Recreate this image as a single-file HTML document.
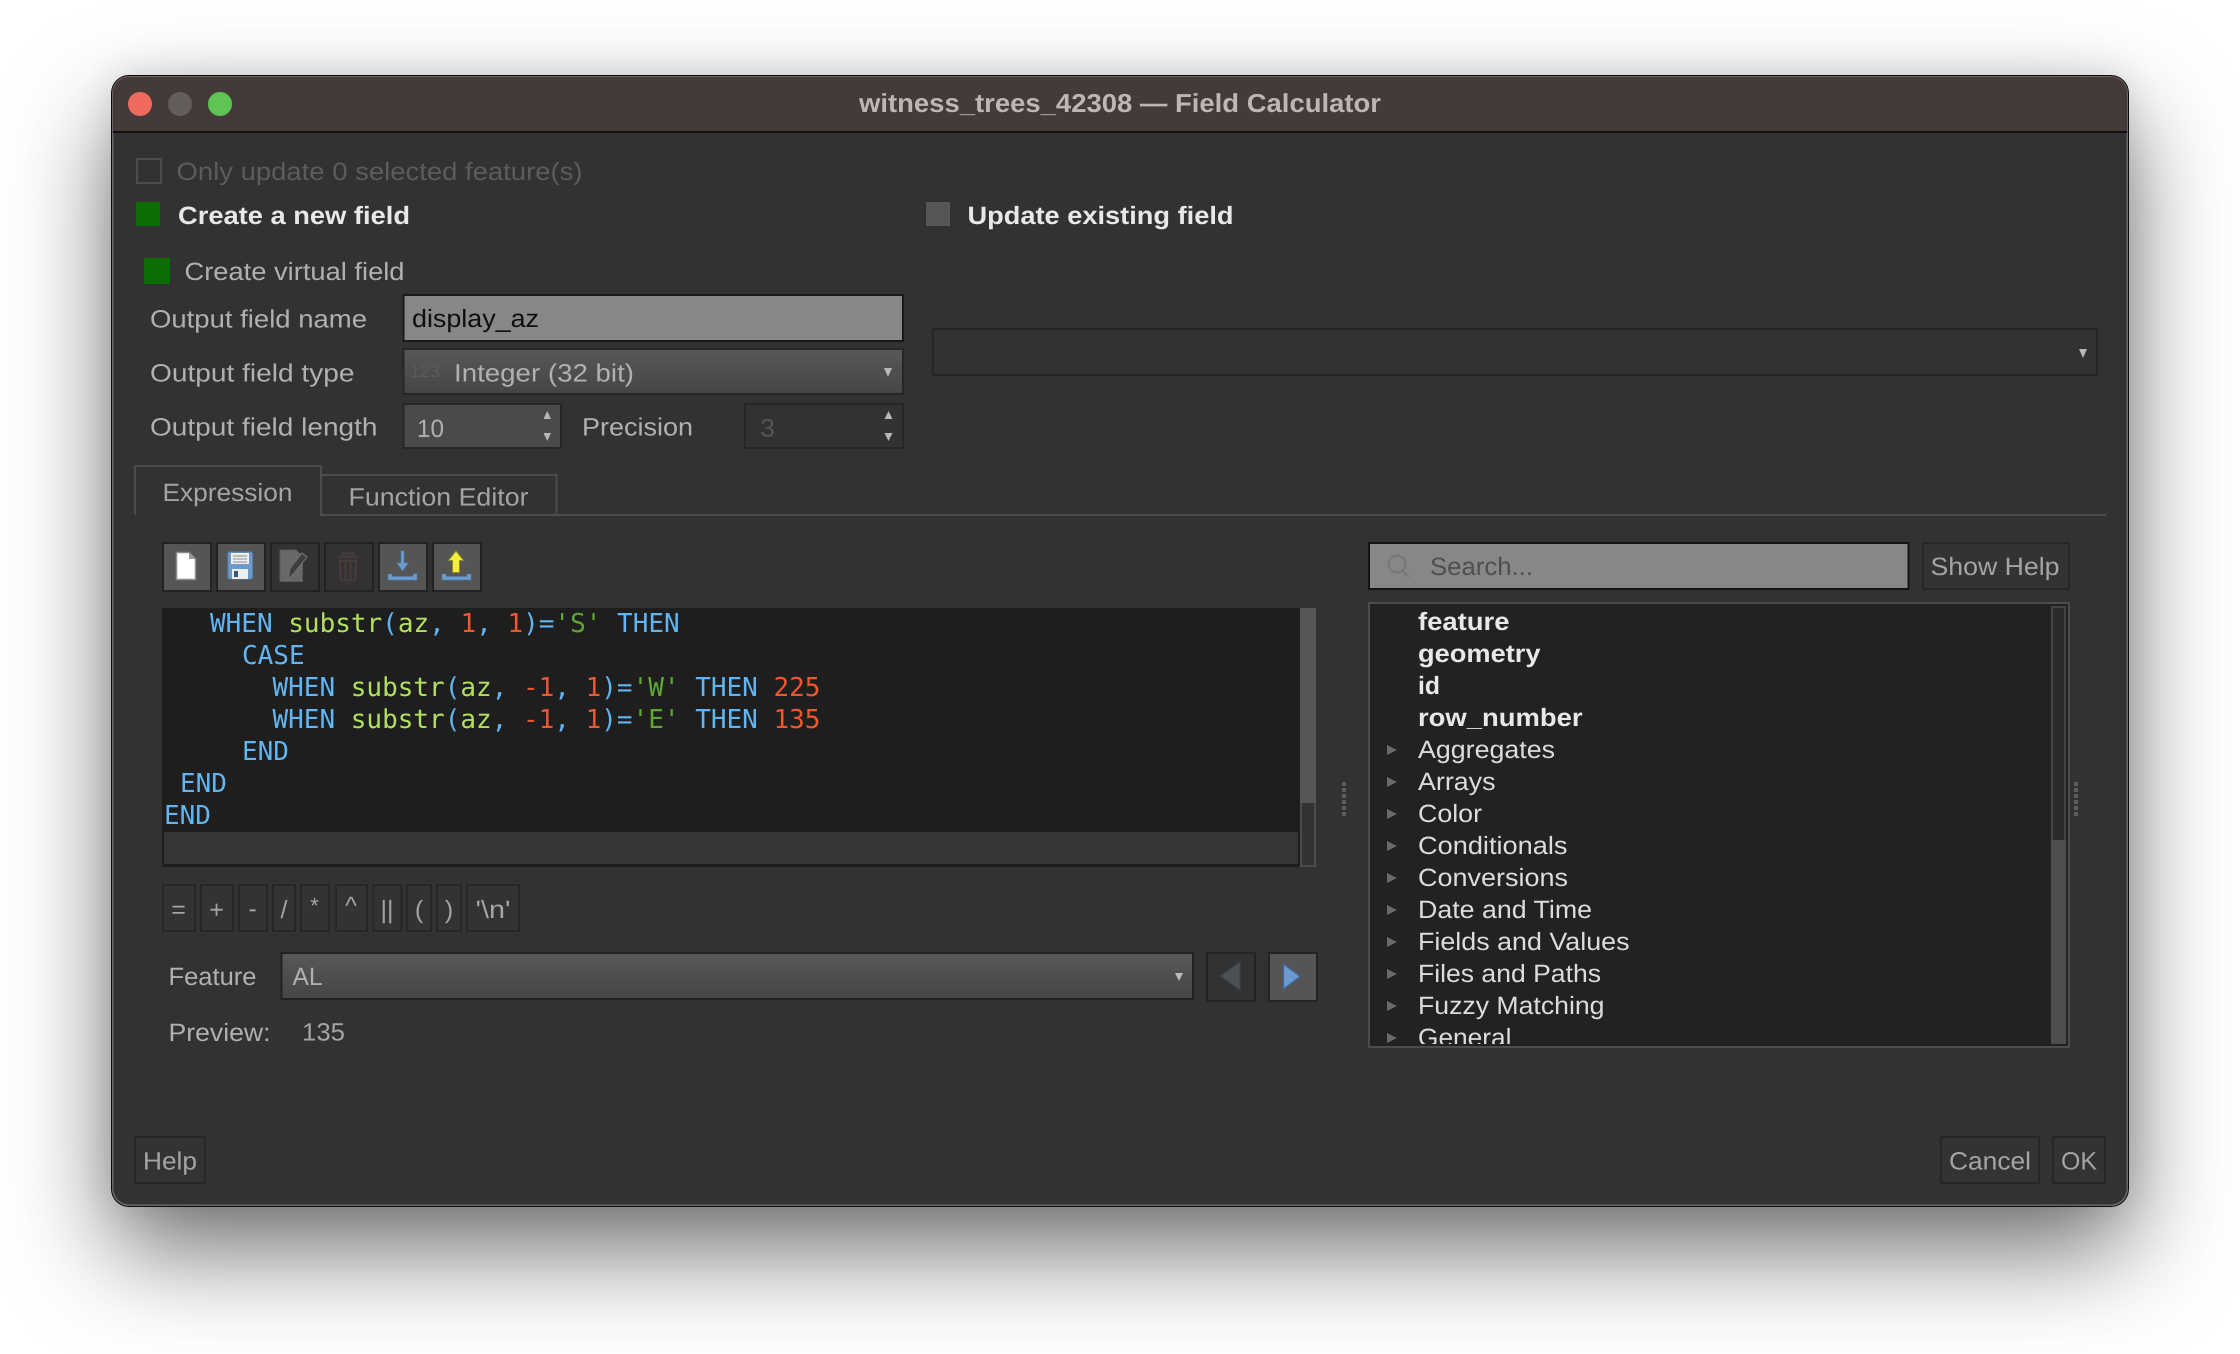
<!DOCTYPE html>
<html><head><meta charset="utf-8"><title>Field Calculator</title>
<style>
html,body{margin:0;padding:0;width:2240px;height:1354px;overflow:hidden;background:#fff}
#sh{position:absolute;left:112px;top:75px;width:2017px;height:1132px;border-radius:18px;box-shadow:0 44px 100px 0 rgba(0,0,0,.56),0 0 36px rgba(0,0,0,.1)}
svg{position:absolute;left:0;top:0}
text{font-family:"Liberation Sans",sans-serif;font-size:25px;fill:#b0b0b0;text-rendering:geometricPrecision}
.b{font-weight:700;fill:#e8e8e8}
.t{fill:#dcdcdc}
.g{fill:#a4a4a4}
.c{font-family:"DejaVu Sans Mono","Liberation Mono",monospace;font-size:26px;fill:#61b5f2;white-space:pre}
.f{fill:#b2e05e}.n{fill:#f0562f}.s{fill:#5ea832}
</style></head><body>
<div id="sh"></div>
<svg width="2240" height="1354" viewBox="0 0 2240 1354" xmlns="http://www.w3.org/2000/svg">
<defs>
<clipPath id="tc"><rect x="113" y="77" width="2014" height="100" rx="16"/></clipPath>
<clipPath id="treeclip"><rect x="1370" y="604" width="680" height="440"/></clipPath>
<linearGradient id="cg" x1="0" y1="0" x2="0" y2="1"><stop offset="0" stop-color="#585858"/><stop offset="1" stop-color="#454545"/></linearGradient>
</defs>
<!-- window -->
<rect x="111" y="75" width="2018" height="1132" rx="18" fill="#0a0a0a"/>
<rect x="112" y="76" width="2016" height="1130" rx="17" fill="#686868"/>
<rect x="113.500" y="77" width="2013" height="1127.500" rx="16" fill="#323232"/>
<rect x="113" y="77" width="2014" height="54" fill="#443a38" clip-path="url(#tc)"/>
<rect x="113" y="131" width="2014" height="2" fill="#111"/>
<circle cx="140" cy="104" r="12" fill="#ee6a5f"/><circle cx="180" cy="104" r="12" fill="#645e5b"/><circle cx="220" cy="104" r="12" fill="#5fc454"/>
<text x="859" y="112" class="b" style="font-size:26px;fill:#bdb6b3" textLength="522" lengthAdjust="spacingAndGlyphs">witness_trees_42308 — Field Calculator</text>

<!-- top options -->
<rect x="137" y="159" width="24" height="24" fill="none" stroke="#4c4c4c" stroke-width="2"/>
<text x="176.500" y="180" style="fill:#5c5c5c" textLength="406" lengthAdjust="spacingAndGlyphs">Only update 0 selected feature(s)</text>
<rect x="136" y="202" width="24" height="24" fill="#0a6e05"/>
<text x="178" y="224" class="b" textLength="232" lengthAdjust="spacingAndGlyphs">Create a new field</text>
<rect x="926" y="202" width="24" height="24" fill="#565656"/>
<text x="967.500" y="224" class="b" textLength="266" lengthAdjust="spacingAndGlyphs">Update existing field</text>
<rect x="144" y="258" width="26" height="26" fill="#0a6e05"/>
<text x="184.500" y="280" textLength="220" lengthAdjust="spacingAndGlyphs">Create virtual field</text>

<text x="150" y="327.500" textLength="217" lengthAdjust="spacingAndGlyphs">Output field name</text>
<rect x="403.500" y="295" width="499.500" height="46" fill="#878787" stroke="#191919" stroke-width="2"/>
<text x="412" y="327" style="fill:#0e0e0e" textLength="127" lengthAdjust="spacingAndGlyphs">display_az</text>

<text x="150" y="381.500" textLength="204.500" lengthAdjust="spacingAndGlyphs">Output field type</text>
<rect x="403.500" y="349" width="499.500" height="45" fill="url(#cg)" stroke="#262626" stroke-width="2"/>
<text x="410" y="377" style="font-size:17px;fill:#5c5c5c" textLength="30" lengthAdjust="spacingAndGlyphs">123</text>
<text x="454" y="381.500" textLength="180" lengthAdjust="spacingAndGlyphs">Integer (32 bit)</text>
<path d="M884 368h8l-4 9z" fill="#b8b8b8"/>

<text x="150" y="435.500" textLength="227.500" lengthAdjust="spacingAndGlyphs">Output field length</text>
<rect x="403.500" y="404" width="157.500" height="44" fill="#4a4a4a" stroke="#262626" stroke-width="2"/>
<text x="417" y="437" textLength="27" lengthAdjust="spacingAndGlyphs">10</text>
<path d="M543.500 419h7.500l-3.750-8z" fill="#b8b8b8"/><path d="M543.500 433h7.500l-3.750 8z" fill="#b8b8b8"/>
<text x="582" y="435.500" textLength="111" lengthAdjust="spacingAndGlyphs">Precision</text>
<rect x="745" y="404" width="158" height="44" fill="#323232" stroke="#262626" stroke-width="2"/>
<text x="760" y="436.500" style="fill:#555" textLength="15" lengthAdjust="spacingAndGlyphs">3</text>
<path d="M884.500 419h8l-4-8z" fill="#b8b8b8"/><path d="M884.500 433h8l-4 8z" fill="#b8b8b8"/>

<rect x="933" y="329" width="1164" height="46" fill="#323232" stroke="#262626" stroke-width="2"/>
<path d="M2079 349h8l-4 9z" fill="#b8b8b8"/>

<!-- tabs -->
<path d="M320 515H2106" stroke="#4c4c4c" stroke-width="2" fill="none"/>
<path d="M135 515V466H321V514" stroke="#4c4c4c" stroke-width="2" fill="none"/>
<path d="M321 475H556.500V515" stroke="#4c4c4c" stroke-width="2" fill="none"/>
<text x="162.500" y="501" class="g" textLength="130" lengthAdjust="spacingAndGlyphs">Expression</text>
<text x="348.500" y="505.500" class="g" textLength="180" lengthAdjust="spacingAndGlyphs">Function Editor</text>

<!-- toolbar buttons -->
<g stroke="#222" stroke-width="2">
<rect x="163" y="543" width="48" height="48" fill="#555"/>
<rect x="217" y="543" width="48" height="48" fill="#555"/>
<rect x="271" y="543" width="48" height="48" fill="#323232"/>
<rect x="325" y="543" width="48" height="48" fill="#323232"/>
<rect x="379" y="543" width="48" height="48" fill="#555"/>
<rect x="433" y="543" width="48" height="48" fill="#555"/>
</g>
<!-- new -->
<path d="M176.500 552.500H189L195.500 559V579.500H176.500Z" fill="#fff" stroke="#8c8c8c" stroke-width="1.500"/>
<path d="M189 552.500V559H195.500Z" fill="#9a9a9a"/>
<!-- save -->
<rect x="228" y="552" width="24.500" height="27" rx="2" fill="#6c9bcb" stroke="#5582b0"/>
<rect x="231" y="553" width="18" height="11" fill="#eee"/>
<path d="M233 556h14M233 559h14M233 562h14" stroke="#8a8a8a" stroke-width="1"/>
<rect x="232" y="569" width="16" height="10" fill="#eee"/>
<rect x="234" y="571" width="4" height="6" fill="#35587f"/>
<!-- edit -->
<path d="M280 550H296L302.500 556V581.500H280Z" fill="#686868" stroke="#5a5a5a"/>
<path d="M288 580L290 568L302 553L307 557L295 572Z" fill="#3e3e3e" stroke="#6e6e6e" stroke-width="1.200"/>
<!-- trash -->
<g fill="none" stroke="#443a3a" stroke-width="2.500">
<path d="M337 557H359"/><path d="M343 556V553.500H353V556"/>
<path d="M339.500 561L341 580H355L356.500 561Z"/>
<path d="M345.500 563V578M350.500 563V578"/>
</g>
<!-- download -->
<path d="M388 574H392V576.500H413V574H417V580H388Z" fill="#6a9ccb" stroke="#4f7eae" stroke-width=".6"/>
<path d="M401 551H404V563H408L402.500 571L397 563H401Z" fill="#6a9ccb" stroke="#4f7eae" stroke-width=".6"/>
<!-- upload -->
<path d="M442 574H446V576.500H467V574H471V580H442Z" fill="#6a9ccb" stroke="#4f7eae" stroke-width=".6"/>
<path d="M456 551L463.500 560.500H459.500V572.500H452.500V560.500H448.500Z" fill="#f4ee3a" stroke="#8f8d2a" stroke-width="1"/>

<!-- editor -->
<rect x="162" y="608" width="1138" height="259" fill="#1e1e1e"/>
<rect x="164" y="832" width="1134" height="32" fill="#363636"/>
<text class="c" y="632" xml:space="preserve"><tspan x="210">WHEN </tspan><tspan class="f">substr</tspan><tspan>(</tspan><tspan class="f">az</tspan><tspan>, </tspan><tspan class="n">1</tspan><tspan>, </tspan><tspan class="n">1</tspan><tspan>)=</tspan><tspan class="s">'S'</tspan><tspan> THEN</tspan></text>
<text class="c" y="664" x="242">CASE</text>
<text class="c" y="696" xml:space="preserve"><tspan x="272.500">WHEN </tspan><tspan class="f">substr</tspan><tspan>(</tspan><tspan class="f">az</tspan><tspan>, </tspan><tspan class="n">-1</tspan><tspan>, </tspan><tspan class="n">1</tspan><tspan>)=</tspan><tspan class="s">'W'</tspan><tspan> THEN </tspan><tspan class="n">225</tspan></text>
<text class="c" y="728" xml:space="preserve"><tspan x="272.500">WHEN </tspan><tspan class="f">substr</tspan><tspan>(</tspan><tspan class="f">az</tspan><tspan>, </tspan><tspan class="n">-1</tspan><tspan>, </tspan><tspan class="n">1</tspan><tspan>)=</tspan><tspan class="s">'E'</tspan><tspan> THEN </tspan><tspan class="n">135</tspan></text>
<text class="c" y="760" x="242">END</text>
<text class="c" y="792" x="180">END</text>
<text class="c" y="824" x="164">END</text>
<!-- editor scrollbar -->
<rect x="1301" y="609" width="14" height="257" fill="#323232" stroke="#4c4c4c" stroke-width="2"/>
<rect x="1300" y="608" width="16" height="195" fill="#565656"/>

<!-- splitter dots -->
<path d="M1344 782V816" stroke="#5c5c5c" stroke-width="4" stroke-dasharray="4 2"/>
<path d="M2076 782V816" stroke="#5c5c5c" stroke-width="4" stroke-dasharray="4 2"/>

<!-- operators -->
<g fill="#333" stroke="#272727" stroke-width="2">
<rect x="163" y="885" width="32" height="46"/>
<rect x="201" y="885" width="32" height="46"/>
<rect x="239" y="885" width="28" height="46"/>
<rect x="273" y="885" width="22" height="46"/>
<rect x="301" y="885" width="28" height="46"/>
<rect x="336" y="885" width="31" height="46"/>
<rect x="373.500" y="885" width="28" height="46"/>
<rect x="407" y="885" width="24" height="46"/>
<rect x="437" y="885" width="24" height="46"/>
<rect x="467" y="885" width="52" height="46"/>
</g>
<g class="ops" text-anchor="middle">
<text x="178.500" y="918" class="g">=</text>
<text x="216.500" y="918" class="g">+</text>
<text x="252.500" y="917" class="g">-</text>
<text x="284" y="918" class="g">/</text>
<text x="314.500" y="913" class="g" style="font-size:22px">*</text>
<text x="351" y="914" class="g">^</text>
<text x="387" y="918" class="g">||</text>
<text x="419" y="918" class="g">(</text>
<text x="449" y="918" class="g">)</text>
<text x="493" y="918" class="g" textLength="35" lengthAdjust="spacingAndGlyphs">'\n'</text>
</g>

<!-- feature -->
<text x="168.500" y="985" textLength="88" lengthAdjust="spacingAndGlyphs">Feature</text>
<rect x="281.500" y="953" width="911.500" height="46" fill="url(#cg)" stroke="#222" stroke-width="2"/>
<text x="292.500" y="985" textLength="30" lengthAdjust="spacingAndGlyphs">AL</text>
<path d="M1175 973h8l-4 8z" fill="#bbb"/>
<rect x="1207" y="953" width="48" height="48" fill="#323232" stroke="#232323" stroke-width="2"/>
<path d="M1240 962V990L1220 976Z" fill="#4c5156" stroke="#3d4145" stroke-width="1"/>
<rect x="1269" y="953" width="48" height="48" fill="#555" stroke="#232323" stroke-width="2"/>
<path d="M1283.500 964V989L1300 976.500Z" fill="#6a9bd0" stroke="#3f6a9e" stroke-width="1.200"/>

<text x="168.500" y="1041" textLength="102" lengthAdjust="spacingAndGlyphs">Preview:</text>
<text x="302" y="1040.500" class="g" textLength="43" lengthAdjust="spacingAndGlyphs">135</text>

<!-- search -->
<rect x="1369" y="543" width="539.500" height="46" fill="#878787" stroke="#141414" stroke-width="2"/>
<circle cx="1397" cy="564" r="8.500" fill="none" stroke="#777" stroke-width="2"/>
<path d="M1403 571L1409 577" stroke="#777" stroke-width="2.500"/>
<text x="1430" y="575" style="fill:#4f4f4f" textLength="103" lengthAdjust="spacingAndGlyphs">Search...</text>
<rect x="1923" y="543" width="146" height="46" fill="#333" stroke="#272727" stroke-width="2"/>
<text x="1930.500" y="575" textLength="129" lengthAdjust="spacingAndGlyphs" class="g">Show Help</text>

<!-- tree -->
<rect x="1369" y="603" width="700" height="444" fill="#222" stroke="#4c4c4c" stroke-width="2"/>
<g clip-path="url(#treeclip)">
<text x="1418" y="630" class="b" textLength="91.500" lengthAdjust="spacingAndGlyphs">feature</text>
<text x="1418" y="662" class="b" textLength="122.500" lengthAdjust="spacingAndGlyphs">geometry</text>
<text x="1418" y="694" class="b" textLength="22" lengthAdjust="spacingAndGlyphs">id</text>
<text x="1418" y="726" class="b" textLength="164.500" lengthAdjust="spacingAndGlyphs">row_number</text>
<text x="1418" y="758" class="t" textLength="137" lengthAdjust="spacingAndGlyphs">Aggregates</text>
<text x="1418" y="790" class="t" textLength="77.500" lengthAdjust="spacingAndGlyphs">Arrays</text>
<text x="1418" y="822" class="t" textLength="64" lengthAdjust="spacingAndGlyphs">Color</text>
<text x="1418" y="854" class="t" textLength="149.500" lengthAdjust="spacingAndGlyphs">Conditionals</text>
<text x="1418" y="886" class="t" textLength="150" lengthAdjust="spacingAndGlyphs">Conversions</text>
<text x="1418" y="918" class="t" textLength="174" lengthAdjust="spacingAndGlyphs">Date and Time</text>
<text x="1418" y="950" class="t" textLength="211.500" lengthAdjust="spacingAndGlyphs">Fields and Values</text>
<text x="1418" y="982" class="t" textLength="183" lengthAdjust="spacingAndGlyphs">Files and Paths</text>
<text x="1418" y="1014" class="t" textLength="186.500" lengthAdjust="spacingAndGlyphs">Fuzzy Matching</text>
<text x="1418" y="1046" class="t" textLength="93.500" lengthAdjust="spacingAndGlyphs">General</text>
<g fill="#6a6a6a">
<path d="M1387 745l10 5l-10 5z"/><path d="M1387 777l10 5l-10 5z"/><path d="M1387 809l10 5l-10 5z"/><path d="M1387 841l10 5l-10 5z"/><path d="M1387 873l10 5l-10 5z"/><path d="M1387 905l10 5l-10 5z"/><path d="M1387 937l10 5l-10 5z"/><path d="M1387 969l10 5l-10 5z"/><path d="M1387 1001l10 5l-10 5z"/><path d="M1387 1033l10 5l-10 5z"/>
</g>
</g>
<rect x="2052" y="607" width="13" height="235" fill="#2b2b2b" stroke="#444" stroke-width="2"/>
<rect x="2051" y="840" width="15" height="204" fill="#4e4e4e"/>

<!-- bottom buttons -->
<rect x="135" y="1137" width="70" height="46" fill="#333" stroke="#272727" stroke-width="2"/>
<text x="143" y="1169.500" class="g" textLength="54" lengthAdjust="spacingAndGlyphs">Help</text>
<rect x="1941" y="1137" width="98" height="46" fill="#333" stroke="#272727" stroke-width="2"/>
<text x="1949" y="1169.500" class="g" textLength="82" lengthAdjust="spacingAndGlyphs">Cancel</text>
<rect x="2053" y="1137" width="52" height="46" fill="#333" stroke="#272727" stroke-width="2"/>
<text x="2061" y="1169.500" class="g" textLength="36" lengthAdjust="spacingAndGlyphs">OK</text>
</svg>
</body></html>
